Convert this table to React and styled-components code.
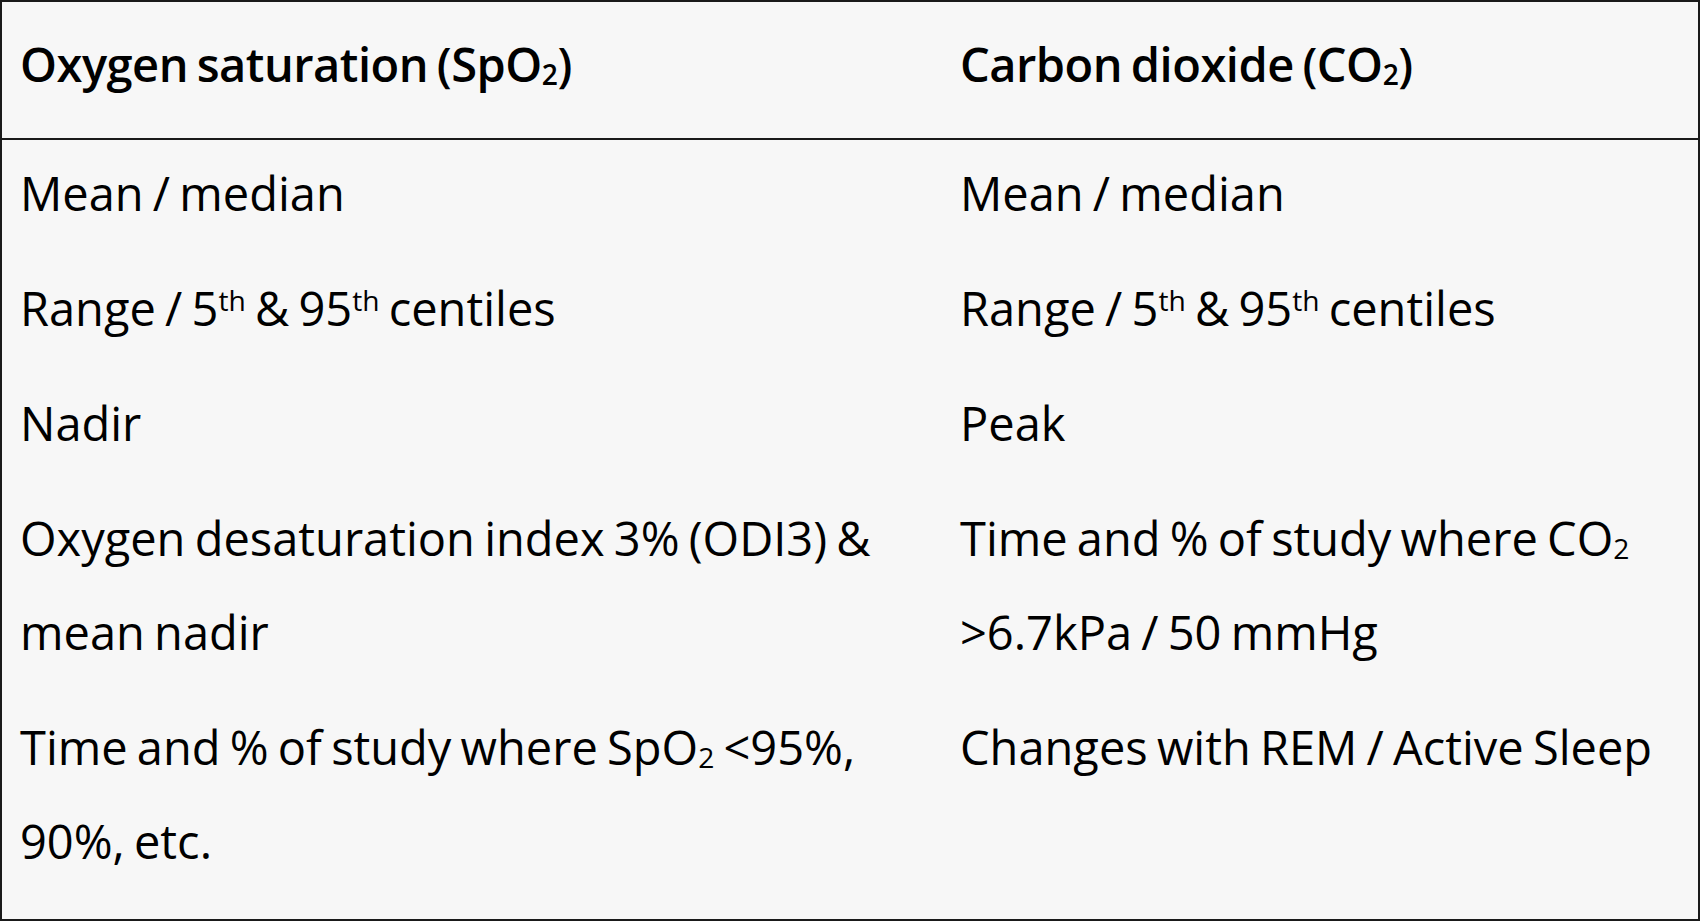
import styled, { createGlobalStyle } from "styled-components";

const GlobalStyle = createGlobalStyle`
    html, body {
        margin: 0;
        padding: 0;
        background: #f7f7f7;
    }
    * { box-sizing: border-box; }
`;

const Frame = styled.div`
    width: 1700px;
    height: 921px;
    border: 2px solid #1a1a1a;
    background: #f7f7f7;
    font-family: "Open Sans", "Noto Sans", sans-serif;
    color: #000;
    overflow: hidden;
`;

const Table = styled.div`
    display: grid;
    grid-template-columns: 940px 1fr;
`;

const HeadCell = styled.div`
    font-size: 47px;
    font-weight: 600;
    line-height: 94px;
    letter-spacing: -0.5px;
    word-spacing: -3px;
    padding: 15px 18px 27px;
    border-bottom: 2px solid #1a1a1a;
`;

const Cell = styled.div`
    font-size: 47px;
    line-height: 94px;
    letter-spacing: 0;
    word-spacing: -3px;
    padding: ${(p) => (p.$first ? "6px" : "10px")} 18px 11px;
`;

const Sub = styled.sub`
    font-size: 0.6em;
    vertical-align: -0.1em;
    line-height: 0;
`;

const Sup = styled.sup`
    font-size: 0.6em;
    vertical-align: 0.55em;
    line-height: 0;
`;

const rows = [
    ["Mean / median", "Mean / median"],
    [
        <>Range / 5<Sup>th</Sup> &amp; 95<Sup>th</Sup> centiles</>,
        <>Range / 5<Sup>th</Sup> &amp; 95<Sup>th</Sup> centiles</>,
    ],
    ["Nadir", "Peak"],
    [
        "Oxygen desaturation index 3% (ODI3) & mean nadir",
        <>Time and % of study where CO<Sub>2</Sub> &gt;6.7kPa / 50 mmHg</>,
    ],
    [
        <>Time and % of study where SpO<Sub>2</Sub> &lt;95%, 90%, etc.</>,
        "Changes with REM / Active Sleep",
    ],
];

const App = () => {
    return (
        <>
            <GlobalStyle />
            <Frame>
                <Table>
                    <HeadCell>Oxygen saturation (SpO<Sub>2</Sub>)</HeadCell>
                    <HeadCell>Carbon dioxide (CO<Sub>2</Sub>)</HeadCell>
                    {rows.map((row, i) =>
                        row.map((content, j) => (
                            <Cell key={`${i}-${j}`} $first={i === 0}>
                                {content}
                            </Cell>
                        ))
                    )}
                </Table>
            </Frame>
        </>
    );
};

export default App;
